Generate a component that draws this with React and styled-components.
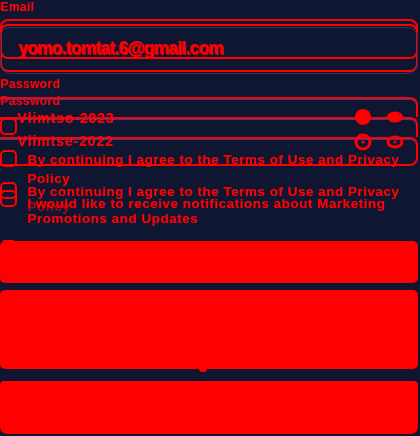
import React from "react";
import styled, { createGlobalStyle } from "styled-components";

const GlobalStyle = createGlobalStyle`
  html, body {
    margin: 0;
    padding: 0;
    background: #0e1631;
  }
  body {
    font-family: "Liberation Sans", Arial, sans-serif;
    color: #ff0000;
  }
`;

const RED = "#ff0000";

export default function App() {
  return (
    <>
      <GlobalStyle />
      <Page>
        <Label $top={2}>Email</Label>

        <Stack $top={6} $height={55}>
          <Outline $top={0} $height={40} />
          <Outline $top={5} $height={48} />
          <Input $top={8} $height={47}>
            <EmailText>yomo.tomtat.6@gmail.com</EmailText>
          </Input>
          <EmailText $ghost style={{ marginTop: 20, marginLeft: 19 }}>
            yomo.tomtat.6@gmail.com
          </EmailText>
        </Stack>

        <Label $top={5}>Password</Label>

        <FormStack $top={5} $height={146}>
          <Label $top={1} as="div" style={{ gridArea: "1 / 1" }}>
            Password
          </Label>
          <Rule $top={2} $height={20} />
          <Rule $top={22} $height={20} />
          <Rule $top={42} $height={29} $closed />

          <Secret $top={17}>Vlimtso-2023</Secret>
          <Secret $top={40}>Vlimtse-2022</Secret>

          <Eyes viewBox="0 0 60 44" width="60" height="44">
            <circle cx="11" cy="9" r="8" fill={RED} />
            <ellipse cx="43" cy="9" rx="8" ry="5.5" fill={RED} />
            <circle cx="11" cy="34" r="7" fill="none" stroke={RED} strokeWidth="3" />
            <circle cx="11" cy="34" r="1.6" fill={RED} />
            <ellipse cx="43" cy="34" rx="7" ry="5" fill="none" stroke={RED} strokeWidth="3" />
            <circle cx="43" cy="34" r="1.4" fill={RED} />
          </Eyes>

          <Check $top={23} />
          <Check $top={55} />
          <Check $top={87} />
          <Check $top={95} />
          <Check $top={145} />

          <Terms $top={58}>By continuing I agree to the Terms of Use and Privacy</Terms>
          <Terms $top={77}>Policy</Terms>
          <Terms $top={90}>By continuing I agree to the Terms of Use and Privacy</Terms>
          <Terms $top={105} $faint>Policy</Terms>
          <Terms $top={102}>I would like to receive notifications about Marketing</Terms>
          <Terms $top={117}>Promotions and Updates</Terms>
          <Terms $top={144}>I would like to receive notifications about Marketing</Terms>
        </FormStack>

        <Block $height={42} $radius="5px" />
        <Block $top={7} $height={79} $radius="5px">
          <Nub />
        </Block>
        <Block $top={12} $height={53} $radius="4px 4px 7px 7px" />
      </Page>
    </>
  );
}

const Page = styled.div`
  display: flex;
  flex-direction: column;
  width: 418px;
`;

const Label = styled.span`
  display: block;
  margin-top: ${(p) => p.$top || 0}px;
  font-size: 12px;
  line-height: 11px;
  font-weight: 700;
  color: ${RED};
  letter-spacing: 0.4px;
`;

const Stack = styled.div`
  display: grid;
  margin-top: ${(p) => p.$top || 0}px;
  height: ${(p) => p.$height}px;
  & > * {
    grid-area: 1 / 1;
    align-self: start;
  }
`;

const FormStack = styled(Stack)`
  overflow: hidden;
`;

const Outline = styled.div`
  margin-top: ${(p) => p.$top}px;
  height: ${(p) => p.$height}px;
  box-sizing: border-box;
  border: 2px solid ${RED};
  border-radius: 8px;
`;

const Input = styled.div`
  margin-top: ${(p) => p.$top}px;
  height: ${(p) => p.$height}px;
  box-sizing: border-box;
  border: 1px solid #2b3552;
  border-radius: 10px;
  display: flex;
  align-items: center;
  padding: 0 17px 6px;
`;

const EmailText = styled.span`
  font-size: 17.5px;
  font-weight: 700;
  line-height: 20px;
  color: ${RED};
  letter-spacing: -0.8px;
  opacity: ${(p) => (p.$ghost ? 0.85 : 1)};
`;

const Rule = styled.div`
  margin-top: ${(p) => p.$top}px;
  height: ${(p) => p.$height}px;
  box-sizing: border-box;
  border-top: 2px solid ${RED};
  border-right: 2px solid ${RED};
  border-bottom: ${(p) => (p.$closed ? `2px solid ${RED}` : "none")};
  border-radius: ${(p) => (p.$closed ? "0 8px 8px 0" : "0 8px 0 0")};
  box-shadow: inset 0 1px 0 #3040a0;
`;

const Secret = styled.span`
  margin-top: ${(p) => p.$top}px;
  margin-left: 17px;
  font-size: 14px;
  line-height: 12px;
  font-weight: 700;
  letter-spacing: 0.9px;
  color: ${RED};
`;

const Eyes = styled.svg`
  justify-self: end;
  margin-top: 13px;
  margin-right: 6px;
`;

const Check = styled.div`
  margin-top: ${(p) => p.$top}px;
  width: 17px;
  height: 17px;
  box-sizing: border-box;
  border: 2px solid ${RED};
  border-radius: 5px;
`;

const Terms = styled.span`
  margin-top: ${(p) => p.$top}px;
  margin-left: 27px;
  font-size: 13.5px;
  line-height: 13px;
  font-weight: 700;
  letter-spacing: 0.5px;
  color: ${RED};
  white-space: nowrap;
  opacity: ${(p) => (p.$faint ? 0.6 : 1)};
`;

const Block = styled.div`
  position: relative;
  margin-top: ${(p) => p.$top || 0}px;
  height: ${(p) => p.$height}px;
  background: ${RED};
  border-radius: ${(p) => p.$radius};
`;

const Nub = styled.span`
  position: absolute;
  left: 199px;
  bottom: -3px;
  width: 8px;
  height: 3px;
  border-radius: 0 0 4px 4px;
  background: ${RED};
`;
